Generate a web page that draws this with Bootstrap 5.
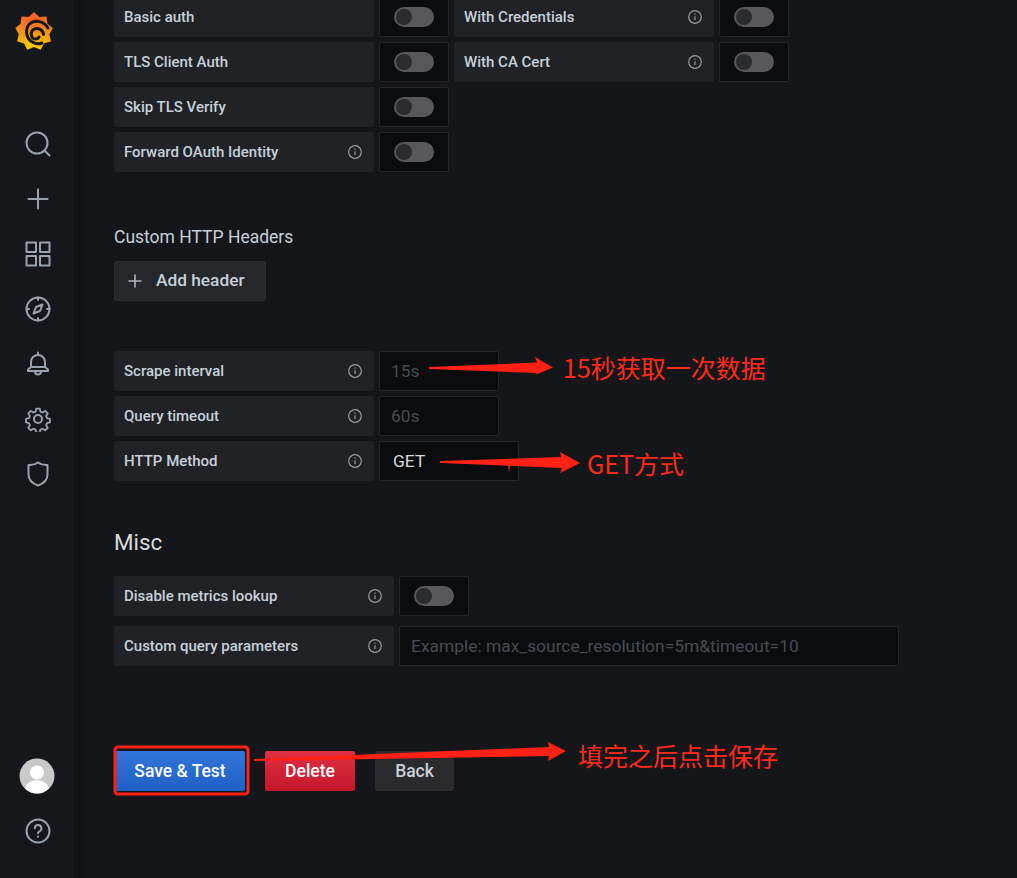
<!DOCTYPE html>
<html lang="en">

<head>
  <meta charset="UTF-8" />
  <meta name="viewport" content="width=device-width, initial-scale=1.0" />
  <title>Data source settings</title>
  <link href="https://cdn.jsdelivr.net/npm/bootstrap@5.3.2/dist/css/bootstrap.min.css" rel="stylesheet" />
  <style>
    html, body { height: 100%; }
    body {
      background: #141619;
      color: #c7d0d9;
      font-family: Roboto, "Liberation Sans", sans-serif;
      font-size: 15px;
      overflow: hidden;
    }

    .page { height: 878px; overflow: hidden; position: relative; }

    /* sidebar */
    .side { width: 74px; height: 878px; background: #15171b; flex: none; padding-bottom: 19.5px; }
    .side-logo { height: 116.5px; padding: 11px 0 0 15px; }
    .side-item { height: 55px; padding-left: 2px; }
    .side-avatar { padding-left: 0; }
    .side-item svg { fill: none; stroke: #9aa2ae; stroke-width: 2; stroke-linecap: round; stroke-linejoin: round; }

    /* content */
    .content {
      padding: 0 0 0 40px;
      background: linear-gradient(90deg, #0f1012, #141619 18px) no-repeat;
      background-size: 30px 100%;
    }
    .rows { margin-top: -3px; row-gap: 5px; }
    .field { height: 40px; gap: 5px; }
    .lbl {
      background: #202226;
      border-radius: 2px;
      height: 40px;
      padding: 0 12px 0 10px;
      font-weight: 500;
      color: #c7d0d9;
    }
    .lbl-260 { width: 260px; }
    .lbl-280 { width: 280px; }
    .lbl svg { fill: none; stroke: #9a9a9c; stroke-width: 1.2; }
    .box {
      background: #0b0c0e;
      border: 1px solid #262628;
      border-radius: 2px;
      height: 40px;
      width: 70px;
    }
    .tog {
      display: block;
      width: 40px;
      height: 20px;
      border-radius: 10px;
      background: #58585a;
      padding: 2px;
    }
    .tog::before {
      content: "";
      display: block;
      width: 16px;
      height: 16px;
      border-radius: 50%;
      background: #2b2c2f;
    }

    .gf-input, .gf-input:focus {
      background: #0b0c0e;
      border: 1px solid #262628;
      border-radius: 2px;
      height: 40px;
      color: #d8d9da;
      font-size: 17.4px;
      padding: 0 11px;
      box-shadow: none;
    }
    .gf-input::placeholder { color: #464c54; opacity: 1; }
    .w-120 { width: 120px; }
    .w-500 { width: 500px; }
    .gf-select {
      display: flex;
      align-items: center;
      width: 140px;
      padding-left: 13px;
    }

    .head-http { font-size: 17.5px; line-height: 24px; margin-top: 53px; color: #c7d0d9; }
    .add-btn {
      width: 152px;
      height: 40px;
      margin-top: 12px;
      background: #25272b;
      border: 1px solid #2c2e32;
      border-radius: 2px;
      color: #c7d0d9;
      font-size: 17.3px;
      font-weight: 500;
      padding: 0 0 0 12px;
      gap: 13px;
    }
    .add-btn svg { stroke: #b0b4ba; stroke-width: 1.6; fill: none; }
    .block-scrape { margin-top: 50px; row-gap: 5px; }
    .head-misc { font-size: 22.4px; font-weight: 400; line-height: 28px; margin: 47px 0 20px; color: #d8d9da; }
    .block-misc { row-gap: 10px; }

    .act-row { margin-top: 85px; height: 40px; }
    .act {
      height: 40px;
      border: 0;
      border-radius: 2px;
      font-size: 17.5px;
      font-weight: 500;
      padding: 0;
      color: #fff;
    }
    .act-save { width: 130px; margin: 0 20px 0 1px; background: linear-gradient(#3274d9, #1f60c4); }
    .act-del { width: 90px; margin-right: 20px; background: linear-gradient(#e02f44, #c4162a); }
    .act-back { width: 79px; background: #2b2b2e; color: #c7d0d9; }

    /* red annotations drawn over the screenshot */
    .marks { position: absolute; left: 0; top: 0; pointer-events: none; }
    .note {
      position: absolute;
      color: #ff2a1a;
      font-family: "Noto Sans CJK SC", Roboto, sans-serif;
      font-size: 25px;
      line-height: 34px;
      white-space: nowrap;
    }
    .note-a { left: 563px; top: 350px; }
    .note-b { left: 587px; top: 446px; }
    .note-c { left: 578px; top: 738px; }
  </style>
</head>

<body>
  <div class="page d-flex">
    <!-- Sidebar -->
    <nav class="side d-flex flex-column">
      <div class="side-logo">
        <svg width="38" height="41" viewBox="0 0 38 41">
          <defs>
            <linearGradient id="gfLogo" x1="0" y1="0" x2="0" y2="1">
              <stop offset="0" stop-color="#f05a28" />
              <stop offset="1" stop-color="#fbca0a" />
            </linearGradient>
          </defs>
          <polygon fill="url(#gfLogo)" points="19,1 24.300,5.900 31.500,5.600 32.400,12.750 37.800,17.100 34.300,23.200 35.900,30.250 29,32.400 25.700,38.800 19,36 12.300,38.800 9,32.400 2.100,30.250 3.700,23.200 .3,17.100 5.600,12.750 6.500,5.600 13.700,5.900" />
          <circle cx="20" cy="21" r="14" fill="url(#gfLogo)" />
          <g fill="none" stroke="#15171b" stroke-linecap="round" stroke-width="3">
            <path d="M33 17C29 10 20 8.500 15 12.500 10 17 10.500 26.500 16.500 30.500c3 2 7 3 10.500 1.500" />
            <path d="M28.500 23.500c-.5-5-6-7.500-10-5-3 2-3 7 0 9 2 1 4.500.5 5.500-1.500" />
          </g>
        </svg>
      </div>
      <a class="side-item d-flex align-items-center justify-content-center" href="#">
        <svg width="28" height="28" viewBox="0 0 28 28"><circle cx="13" cy="13" r="10.500" /><path d="M21 21l4.500 4.500" /></svg>
      </a>
      <a class="side-item d-flex align-items-center justify-content-center" href="#">
        <svg width="24" height="24" viewBox="0 0 24 24"><path d="M12 2.500v19M2.500 12h19" /></svg>
      </a>
      <a class="side-item d-flex align-items-center justify-content-center" href="#">
        <svg width="26" height="26" viewBox="0 0 26 26"><rect x="1.500" y="1.500" width="9.500" height="9.500" /><rect x="15" y="1.500" width="9.500" height="9.500" /><rect x="1.500" y="15" width="9.500" height="9.500" /><rect x="15" y="15" width="9.500" height="9.500" /></svg>
      </a>
      <a class="side-item d-flex align-items-center justify-content-center" href="#">
        <svg width="26" height="26" viewBox="0 0 26 26"><circle cx="13" cy="13" r="11.500" /><path d="M17.500 8.500l-2.500 6.500-6.500 2.500 2.500-6.500z" /><path d="M13 1.500v2.500M13 22v2.500M1.500 13h2.500M22 13h2.500" /></svg>
      </a>
      <a class="side-item d-flex align-items-center justify-content-center" href="#">
        <svg width="24" height="26" viewBox="0 0 24 26"><path d="M12 1.500v2.500" /><path d="M5 16v-5a7 7 0 0 1 14 0v5" /><path d="M5 16l-3 2.500v1.500h20v-1.500l-3-2.500z" /><path d="M9 20.500a3 3 0 0 0 6 0" /></svg>
      </a>
      <a class="side-item d-flex align-items-center justify-content-center" href="#">
        <svg width="26" height="26" viewBox="0 0 26 26"><circle cx="13" cy="13" r="4" /><path d="M11 1.500h4l.7 3.300 2.400 1 2.900-1.800 2.800 2.800-1.800 2.900 1 2.400 3.300.7v4l-3.300.7-1 2.400 1.800 2.900-2.800 2.800-2.900-1.800-2.400 1-.7 3.300h-4l-.7-3.300-2.400-1-2.900 1.800-2.800-2.800 1.800-2.900-1-2.400-3.300-.7v-4l3.300-.7 1-2.400-1.800-2.900 2.800-2.800 2.900 1.800 2.400-1z" transform="translate(1.300 1.300) scale(.9)" /></svg>
      </a>
      <a class="side-item d-flex align-items-center justify-content-center" href="#">
        <svg width="22" height="26" viewBox="0 0 22 26"><path d="M11 1.500c2.500 2 6 2.800 9.500 2.500v9.500c0 5-4 9-9.500 11-5.500-2-9.500-6-9.500-11V4c3.500.3 7-.5 9.500-2.500z" /></svg>
      </a>
      <a class="side-item side-avatar d-flex align-items-center justify-content-center mt-auto" href="#">
        <svg width="36" height="36" viewBox="0 0 36 36">
          <defs><clipPath id="avClip"><circle cx="18" cy="18" r="17.500" /></clipPath></defs>
          <circle cx="18" cy="18" r="17.500" fill="#c9c9c9" stroke="none" />
          <g clip-path="url(#avClip)" stroke="none">
            <circle cx="18" cy="14.500" r="7" fill="#fff" />
            <ellipse cx="18" cy="32" rx="12" ry="10" fill="#fff" />
          </g>
        </svg>
      </a>
      <a class="side-item d-flex align-items-center justify-content-center" href="#">
        <svg width="26" height="26" viewBox="0 0 26 26"><circle cx="13" cy="13" r="11.500" /><path d="M9.800 10.300a3.300 3.300 0 1 1 4.700 3c-1 .5-1.500 1-1.500 2" /><path d="M13 18.600v.2" /></svg>
      </a>
    </nav>

    <!-- Settings -->
    <main class="content flex-grow-1">
      <div class="rows d-flex flex-column">
        <div class="field d-flex">
          <div class="lbl lbl-260 d-flex align-items-center">Basic auth</div>
          <div class="box d-flex align-items-center justify-content-center"><span class="tog"></span></div>
          <div class="lbl lbl-260 d-flex align-items-center justify-content-between">With Credentials
            <svg width="14" height="14" viewBox="0 0 14 14"><circle cx="7" cy="7" r="6.300" /><path d="M7 6.300v3.700M7 3.600v1.200" /></svg>
          </div>
          <div class="box d-flex align-items-center justify-content-center"><span class="tog"></span></div>
        </div>
        <div class="field d-flex">
          <div class="lbl lbl-260 d-flex align-items-center">TLS Client Auth</div>
          <div class="box d-flex align-items-center justify-content-center"><span class="tog"></span></div>
          <div class="lbl lbl-260 d-flex align-items-center justify-content-between">With CA Cert
            <svg width="14" height="14" viewBox="0 0 14 14"><circle cx="7" cy="7" r="6.300" /><path d="M7 6.300v3.700M7 3.600v1.200" /></svg>
          </div>
          <div class="box d-flex align-items-center justify-content-center"><span class="tog"></span></div>
        </div>
        <div class="field d-flex">
          <div class="lbl lbl-260 d-flex align-items-center">Skip TLS Verify</div>
          <div class="box d-flex align-items-center justify-content-center"><span class="tog"></span></div>
        </div>
        <div class="field d-flex">
          <div class="lbl lbl-260 d-flex align-items-center justify-content-between">Forward OAuth Identity
            <svg width="14" height="14" viewBox="0 0 14 14"><circle cx="7" cy="7" r="6.300" /><path d="M7 6.300v3.700M7 3.600v1.200" /></svg>
          </div>
          <div class="box d-flex align-items-center justify-content-center"><span class="tog"></span></div>
        </div>
      </div>

      <div class="head-http">Custom HTTP Headers</div>
      <button class="add-btn btn d-flex align-items-center" type="button">
        <svg width="16" height="16" viewBox="0 0 16 16"><path d="M8 1.500v13M1.500 8h13" /></svg>
        Add header
      </button>

      <div class="block-scrape d-flex flex-column">
        <div class="field d-flex">
          <div class="lbl lbl-260 d-flex align-items-center justify-content-between">Scrape interval
            <svg width="14" height="14" viewBox="0 0 14 14"><circle cx="7" cy="7" r="6.300" /><path d="M7 6.300v3.700M7 3.600v1.200" /></svg>
          </div>
          <input class="form-control gf-input w-120" placeholder="15s" />
        </div>
        <div class="field d-flex">
          <div class="lbl lbl-260 d-flex align-items-center justify-content-between">Query timeout
            <svg width="14" height="14" viewBox="0 0 14 14"><circle cx="7" cy="7" r="6.300" /><path d="M7 6.300v3.700M7 3.600v1.200" /></svg>
          </div>
          <input class="form-control gf-input w-120" placeholder="60s" />
        </div>
        <div class="field d-flex">
          <div class="lbl lbl-260 d-flex align-items-center justify-content-between">HTTP Method
            <svg width="14" height="14" viewBox="0 0 14 14"><circle cx="7" cy="7" r="6.300" /><path d="M7 6.300v3.700M7 3.600v1.200" /></svg>
          </div>
          <div class="gf-input gf-select">GET</div>
        </div>
      </div>

      <h3 class="head-misc">Misc</h3>
      <div class="block-misc d-flex flex-column">
        <div class="field d-flex">
          <div class="lbl lbl-280 d-flex align-items-center justify-content-between">Disable metrics lookup
            <svg width="14" height="14" viewBox="0 0 14 14"><circle cx="7" cy="7" r="6.300" /><path d="M7 6.300v3.700M7 3.600v1.200" /></svg>
          </div>
          <div class="box d-flex align-items-center justify-content-center"><span class="tog"></span></div>
        </div>
        <div class="field d-flex">
          <div class="lbl lbl-280 d-flex align-items-center justify-content-between">Custom query parameters
            <svg width="14" height="14" viewBox="0 0 14 14"><circle cx="7" cy="7" r="6.300" /><path d="M7 6.300v3.700M7 3.600v1.200" /></svg>
          </div>
          <input class="form-control gf-input w-500" placeholder="Example: max_source_resolution=5m&amp;timeout=10" />
        </div>
      </div>

      <div class="act-row d-flex">
        <button class="btn act act-save" type="button">Save &amp; Test</button>
        <button class="btn act act-del" type="button">Delete</button>
        <button class="btn act act-back" type="button">Back</button>
      </div>
    </main>

    <!-- Red annotations -->
    <svg class="marks" width="1017" height="878" viewBox="0 0 1017 878">
      <g fill="#ff2116">
        <polygon points="429,367 537,362.500 535,357 553,367.500 535,375 537,373 429,369" />
        <polygon points="440,461 561,457 560,452 580,463 560,473 562,468 440,463" />
        <polygon points="508,465 510,465 509,473" />
        <polygon points="254,759 549,747 548,742 566,751 548,761 549,756 254,761" />
      </g>
      <rect x="115" y="747" width="133" height="47" rx="3" fill="none" stroke="#ff2116" stroke-width="3" />
    </svg>
    <div class="note note-a">15秒获取一次数据</div>
    <div class="note note-b">GET方式</div>
    <div class="note note-c">填完之后点击保存</div>
  </div>
</body>

</html>
